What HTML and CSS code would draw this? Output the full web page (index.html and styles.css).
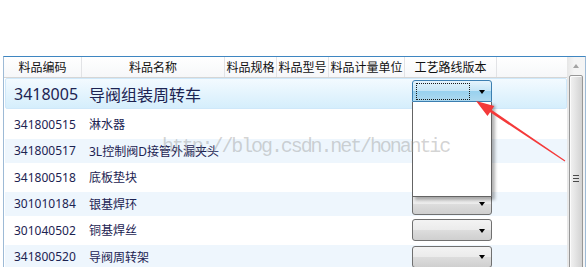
FILE: index.html
```html
<!DOCTYPE html>
<html lang="zh-CN">
<head>
    <meta charset="UTF-8">
    <title>料品列表</title>
    <link rel="stylesheet" href="styles.css">
</head>
<body>
    <div class="grid">
        <div class="main">
            <div class="header">
                <div class="hcell c1">料品编码</div>
                <div class="hcell c2">料品名称</div>
                <div class="hcell c3">料品规格</div>
                <div class="hcell c4">料品型号</div>
                <div class="hcell c5">料品计量单位</div>
                <div class="hcell c6">工艺路线版本</div>
                <div class="hcell fill"></div>
            </div>

            <div class="row selected">
                <div class="cell c1">3418005</div>
                <div class="cell c2">导阀组装周转车</div>
                <div class="cell c3"></div>
                <div class="cell c4"></div>
                <div class="cell c5"></div>
                <div class="cell c6 top">
                    <div class="combo open">
                        <span class="focus"></span>
                        <span class="caret"></span>
                        <div class="popup"></div>
                    </div>
                </div>
            </div>

            <div class="rows">
                <div class="row">
                    <div class="cell c1">341800515</div>
                    <div class="cell c2">淋水器</div>
                    <div class="cell c3"></div><div class="cell c4"></div><div class="cell c5"></div>
                    <div class="cell c6"><div class="combo"><span class="caret"></span></div></div>
                </div>
                <div class="row alt">
                    <div class="cell c1">341800517</div>
                    <div class="cell c2">3L控制阀D接管外漏夹头</div>
                    <div class="cell c3"></div><div class="cell c4"></div><div class="cell c5"></div>
                    <div class="cell c6"><div class="combo"><span class="caret"></span></div></div>
                </div>
                <div class="row">
                    <div class="cell c1">341800518</div>
                    <div class="cell c2">底板垫块</div>
                    <div class="cell c3"></div><div class="cell c4"></div><div class="cell c5"></div>
                    <div class="cell c6"><div class="combo"><span class="caret"></span></div></div>
                </div>
                <div class="row alt">
                    <div class="cell c1">301010184</div>
                    <div class="cell c2">银基焊环</div>
                    <div class="cell c3"></div><div class="cell c4"></div><div class="cell c5"></div>
                    <div class="cell c6"><div class="combo"><span class="caret"></span></div></div>
                </div>
                <div class="row">
                    <div class="cell c1">301040502</div>
                    <div class="cell c2">铜基焊丝</div>
                    <div class="cell c3"></div><div class="cell c4"></div><div class="cell c5"></div>
                    <div class="cell c6"><div class="combo"><span class="caret"></span></div></div>
                </div>
                <div class="row alt">
                    <div class="cell c1">341800520</div>
                    <div class="cell c2">导阀周转架</div>
                    <div class="cell c3"></div><div class="cell c4"></div><div class="cell c5"></div>
                    <div class="cell c6"><div class="combo"><span class="caret"></span></div></div>
                </div>
            </div>
        </div>

        <div class="scrollbar">
            <div class="sb-up"><span class="sb-arrow"></span></div>
            <div class="sb-thumb">
                <span class="grip"></span>
                <span class="grip"></span>
                <span class="grip"></span>
            </div>
        </div>
    </div>

    <div class="watermark">http://blog.csdn.net/honantic</div>

    <svg class="pointer" width="588" height="267" viewBox="0 0 588 267">
        <polygon fill="#f43a3a" points="565.3,160.6 491.7,109.9 494.3,106.1 476,101 487.5,116.1 490.1,112.3 564.7,161.4"/>
    </svg>
</body>
</html>
```

FILE: styles.css
```css
html, body { margin: 0; padding: 0; }
body {
    width: 588px;
    height: 267px;
    overflow: hidden;
    position: relative;
    background: #fff;
    font-family: "Noto Sans", "Noto Sans CJK SC", sans-serif;
    font-size: 12px;
}

.grid {
    display: flex;
    margin: 56px 0 0 3px;
    width: 581px;
    height: 240px;
    border: 1px solid #9dbad6;
    border-top-color: #3f86c1;
    border-bottom: none;
}
.main { flex: 1; display: flex; flex-direction: column; }

.header {
    display: flex;
    height: 20px;
    border-bottom: 1px solid #d5d5d5;
    background: linear-gradient(#ffffff, #f6f7f9);
}
.hcell {
    display: flex;
    align-items: center;
    justify-content: center;
    border-right: 1px solid #e2e3e6;
    color: #111;
    white-space: nowrap;
    overflow: hidden;
    box-sizing: border-box;
}
.hcell.fill { flex: 1; border-right: none; }

.c1 { width: 78px; }
.c2 { width: 143px; }
.c3 { width: 52px; }
.c4 { width: 52px; }
.c5 { width: 76px; }
.c6 { width: 92px; }

.row {
    display: flex;
    align-items: center;
    height: 24px;
    margin-left: 1px;
    color: #1c2352;
    box-sizing: border-box;
}
.row.alt { background: #eef6fd; }
.row .cell { flex: none; white-space: nowrap; box-sizing: border-box; }
.row .cell.c1 { padding-left: 9px; }
.row .cell.c2 { padding-left: 6px; }
.row .cell.c6 { padding-left: 6px; }

.row.selected {
    height: 31px;
    border: 1px solid #cfe8fa;
    border-radius: 2px;
    background: linear-gradient(#f3faff, #d5eefc);
    font-size: 16px;
    margin-left: 1px;
}
.row.selected .cell.c1 { padding-left: 8px; }
.row.selected .cell.c2 { padding-left: 5px; }
.row.selected .cell.c6 { padding-left: 5px; align-self: flex-start; padding-top: 1px; }

.rows {
    display: flex;
    flex-direction: column;
    gap: 2.6px;
    margin-top: 3px;
}

.combo {
    position: relative;
    display: flex;
    align-items: center;
    justify-content: flex-end;
    width: 80px;
    height: 22px;
    padding: 1px 6px 0 0;
    box-sizing: border-box;
    border: 1px solid #707070;
    border-radius: 3px;
    background: linear-gradient(#f3f3f3 0%, #ebebeb 50%, #dddddd 50%, #cfcfcf 100%);
}
.combo.open {
    border-color: #3c7fb1;
    border-radius: 3px 3px 0 0;
    background: linear-gradient(#e5f4fc 0%, #c4e5f6 50%, #98d1ef 50%, #aed9ef 100%);
}
.caret {
    width: 0;
    height: 0;
    border-left: 3.5px solid transparent;
    border-right: 3.5px solid transparent;
    border-top: 4px solid #000;
}
.focus {
    position: absolute;
    left: 3px;
    top: 2px;
    width: 54px;
    height: 17px;
    border: 1px dotted #1a1a1a;
    box-sizing: border-box;
}
.popup {
    position: absolute;
    left: -1px;
    top: 21px;
    width: 80px;
    height: 95px;
    box-sizing: border-box;
    background: #fff;
    border: 1px solid #646464;
    border-top: none;
    box-shadow: 3px 3px 3px rgba(0, 0, 0, 0.3);
    z-index: 2;
}

.scrollbar {
    width: 18px;
    display: flex;
    flex-direction: column;
    background: linear-gradient(to right, #e6e6e6, #f4f4f4 40%, #f4f4f4);
}
.sb-up {
    height: 18px;
    display: flex;
    align-items: center;
    justify-content: center;
}
.sb-arrow {
    width: 0;
    height: 0;
    border-left: 3.5px solid transparent;
    border-right: 3.5px solid transparent;
    border-bottom: 4px solid #a3a3a3;
}
.sb-thumb {
    flex: 1;
    margin: 0 2px;
    border: 1px solid #979797;
    border-radius: 2px;
    background: linear-gradient(to right, #f2f2f2, #e6e6e6 40%, #d2d2d2);
    box-shadow: inset 1px 1px 0 #fbfbfb;
    display: flex;
    flex-direction: column;
    align-items: center;
    padding-top: 99px;
    gap: 2px;
}
.grip {
    width: 6px;
    height: 1px;
    background: #4a4a4a;
}

.watermark {
    position: absolute;
    left: 162px;
    top: 135px;
    z-index: 3;
    font-family: "Liberation Mono", monospace;
    font-size: 20px;
    letter-spacing: -2.1px;
    color: rgba(150, 150, 150, 0.42);
    white-space: nowrap;
    pointer-events: none;
}
.pointer {
    position: absolute;
    left: 0;
    top: 0;
    z-index: 4;
    pointer-events: none;
}
```
